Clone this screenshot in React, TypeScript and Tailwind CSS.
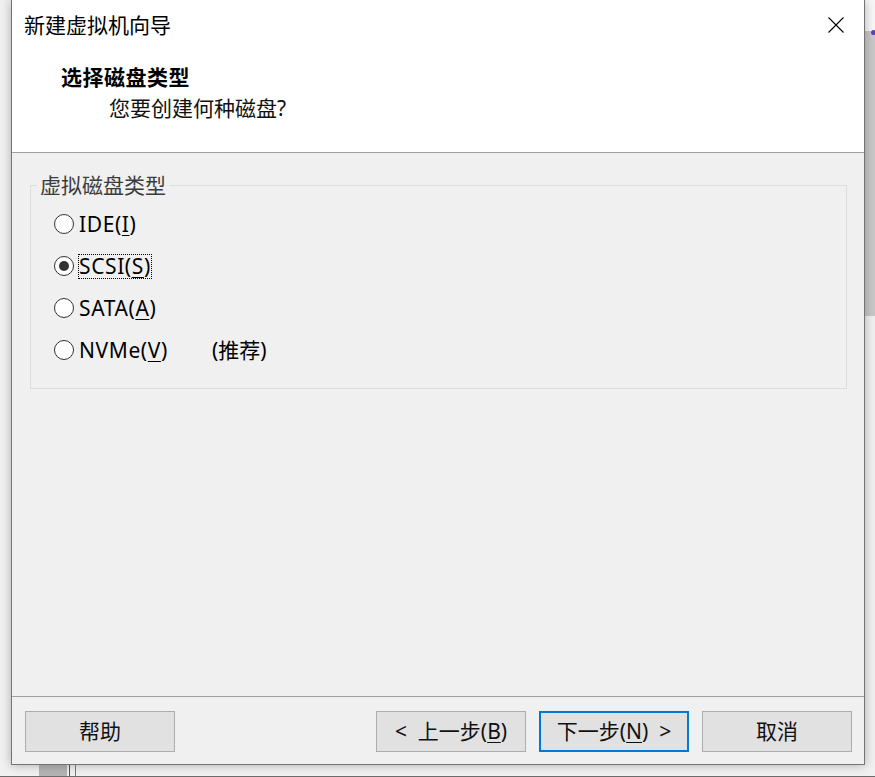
import React from "react";

const font = { fontFamily: '"Noto Sans", "Noto Sans CJK SC", sans-serif' };

function Radio({ checked }: { checked?: boolean }) {
  return (
    <span className="flex h-[20px] w-[20px] shrink-0 items-center justify-center rounded-full border border-[#333333] bg-white">
      {checked && <span className="h-[10px] w-[10px] rounded-full bg-[#333333]" />}
    </span>
  );
}

function Row({
  label,
  mnemonicIndex,
  checked,
  focused,
  extra,
}: {
  label: string;
  mnemonicIndex: number;
  checked?: boolean;
  focused?: boolean;
  extra?: string;
}) {
  const before = label.slice(0, mnemonicIndex);
  const m = label[mnemonicIndex];
  const after = label.slice(mnemonicIndex + 1);
  return (
    <div className="flex h-[42px] items-center">
      <Radio checked={checked} />
      <span
        className={
          "ml-[4px] border px-0 text-[21px] leading-[23px] tracking-[0.6px] text-black " +
          (focused ? "border-dotted border-black" : "border-transparent")
        }
      >
        {before}
        <span className="underline underline-offset-[3px] decoration-1">{m}</span>
        {after}
      </span>
      {extra && <span className="ml-[43px] text-[21px] leading-[23px] text-black">{extra}</span>}
    </div>
  );
}

function Button({
  children,
  primary,
}: {
  children: React.ReactNode;
  primary?: boolean;
}) {
  return (
    <div
      className={
        "flex h-[41px] w-[150px] items-center justify-center bg-[#e1e1e1] text-[21px] text-[#111111] " +
        (primary ? "border-2 border-[#0078d7]" : "border border-[#adadad]")
      }
    >
      {children}
    </div>
  );
}

export default function App() {
  return (
    <div className="relative h-[777px] w-[875px] overflow-hidden bg-[#f1f1f1]" style={font}>
      {/* desktop fragments behind the window */}
      <div className="absolute left-[865px] top-0 h-[31px] w-[10px] bg-[#f8f8f8]" />
      <div className="absolute left-[865px] top-[31px] h-[285px] w-[10px] bg-[#c8c8c8]" />
      <div className="absolute left-[871px] top-[30px] h-[5px] w-[5px] rounded-full bg-[#5b3fc4]" />
      <div className="absolute left-[39px] top-[765px] h-[11px] w-[28px] bg-[#b4b4b4]" />
      <div className="absolute left-[69px] top-[765px] h-[11px] w-[1px] bg-[#555555]" />
      <div className="absolute left-[75px] top-[765px] h-[11px] w-[1px] bg-[#4a86c0]" />
      <div className="absolute left-0 top-[776px] h-[1px] w-[875px] bg-[#6b6b6b]" />

      {/* dialog window */}
      <div className="absolute left-[11px] top-0 flex h-[765px] w-[854px] flex-col border border-t-0 border-[#747474] bg-[#f0f0f0] shadow-[0_0_10px_rgba(0,0,0,0.28)]">
        {/* title + header (white) */}
        <div className="flex h-[153px] flex-col border-b border-[#a0a0a0] bg-white">
          <div className="flex h-[50px] items-center justify-between pl-[12px] pr-[20px]">
            <span className="text-[21px] leading-none text-black">新建虚拟机向导</span>
            <svg width="16" height="16" viewBox="0 0 16 16">
              <path d="M0.5 0.5 L15.5 15.5 M15.5 0.5 L0.5 15.5" stroke="#000" strokeWidth="1.1" fill="none" />
            </svg>
          </div>
          <div className="pl-[49px] pt-[15px] text-[21px] font-bold leading-[24px] tracking-[0.5px] text-black">
            选择磁盘类型
          </div>
          <div className="pl-[97px] pt-[7px] text-[21px] leading-[24px] text-[#111111]">
            您要创建何种磁盘?
          </div>
        </div>

        {/* content */}
        <div className="flex-1 px-[18px] pt-[32px] pr-[17px]">
          <div className="relative h-[204px] border border-[#dcdcdc] pl-[23px] pt-[17px]">
            <span className="absolute left-[6px] top-[-13px] bg-[#f0f0f0] px-[3px] text-[21px] leading-[24px] text-[#3c3c3c]">
              虚拟磁盘类型
            </span>
            <Row label="IDE(I)" mnemonicIndex={4} />
            <Row label="SCSI(S)" mnemonicIndex={5} checked focused />
            <Row label="SATA(A)" mnemonicIndex={5} />
            <Row label="NVMe(V)" mnemonicIndex={5} extra="(推荐)" />
          </div>
        </div>

        {/* footer */}
        <div className="flex h-[68px] border-t border-[#a0a0a0] pl-[13px] pr-[12px] pt-[14px]">
          <Button>帮助</Button>
          <div className="ml-auto flex gap-[13px]">
            <Button>
              <span>
                &lt;&nbsp;&nbsp;上一步(<span className="underline underline-offset-[3px] decoration-1">B</span>)
              </span>
            </Button>
            <Button primary>
              <span>
                下一步(<span className="underline underline-offset-[3px] decoration-1">N</span>)&nbsp;&nbsp;&gt;
              </span>
            </Button>
            <Button>取消</Button>
          </div>
        </div>
      </div>
    </div>
  );
}
